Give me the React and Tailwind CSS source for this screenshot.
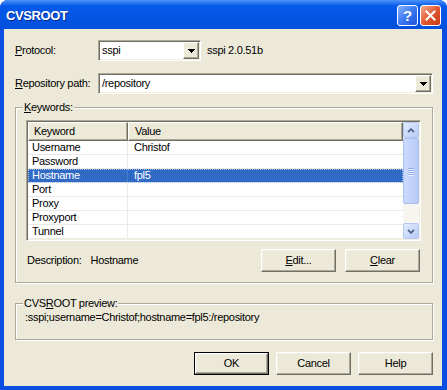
import React from "react";

const raised =
  "bg-[#ece9d8] border border-t-white border-l-white border-r-[#716f64] border-b-[#716f64] shadow-[inset_-1px_-1px_0_#aca899,inset_1px_1px_0_#f1efe2]";
const sunken =
  "border border-t-[#aca899] border-l-[#aca899] border-r-white border-b-white shadow-[inset_1px_1px_0_#716f64,inset_-1px_-1px_0_#f1efe2] p-[1px]";
const etched =
  "border border-[#aca899] shadow-[inset_1px_1px_0_#ffffff,1px_1px_0_#ffffff]";

function Combo({ value, className }) {
  return (
    <div className={`${sunken} h-[21px] bg-white flex ${className}`}>
      <div className="flex-1 pl-[2px] leading-[17px]">{value}</div>
      <div className={`${raised} w-[16px] h-[17px] flex items-center justify-center`}>
        <svg width="7" height="4" viewBox="0 0 7 4" className="mt-[1px]">
          <path d="M0 0h7v1h-1v1h-1v1h-1v1h-1v-1h-1v-1h-1v-1h-1z" fill="#000" />
        </svg>
      </div>
    </div>
  );
}

function Btn({ children, className = "" }) {
  return (
    <div className={`${raised} w-[75px] h-[23px] flex items-center justify-center ${className}`}>
      {children}
    </div>
  );
}

function ScrollBtn({ up }) {
  return (
    <div className="h-[16px] w-[16px] rounded-[2px] border border-[#b4c8f4] bg-linear-to-br from-[#e3ebfe] to-[#b7cbf7] flex items-center justify-center">
      <svg width="8" height="5" viewBox="0 0 8 5">
        <path
          d={up ? "M1 4.2L4 1.2L7 4.2" : "M1 0.8L4 3.8L7 0.8"}
          stroke="#4d6185"
          strokeWidth="1.8"
          fill="none"
        />
      </svg>
    </div>
  );
}

const rows = [
  ["Username", "Christof"],
  ["Password", ""],
  ["Hostname", "fpl5"],
  ["Port", ""],
  ["Proxy", ""],
  ["Proxyport", ""],
  ["Tunnel", ""],
];

export default function App() {
  return (
    <div className="w-[447px] h-[390px] flex flex-col bg-[#0a4fe2] rounded-t-[8px] overflow-hidden [font-family:'Liberation_Sans',Arial,sans-serif] text-[11px] leading-[13px] text-black tracking-[-0.3px]">
      {/* Title bar */}
      <div className="h-[29px] flex bg-linear-to-b from-[#4a94f8] from-0% via-[#0559ea] via-20% to-[#0150de] to-100%">
        <div className="flex-1 flex items-center pl-[6px] pt-[1px] text-white font-bold text-[13px] tracking-[-0.4px] [text-shadow:1px_1px_0_#0a2a8a]">
          CVSROOT
        </div>
        <div className="flex gap-[2px] pt-[5px] pr-[6px]">
          <div className="w-[21px] h-[21px] rounded-[3px] border border-white bg-linear-to-br from-[#8cb2fb] via-[#3a78f2] to-[#1d54d6] flex items-center justify-center text-white font-bold text-[15px] tracking-normal">
            ?
          </div>
          <div className="w-[21px] h-[21px] rounded-[3px] border border-white bg-linear-to-br from-[#f0ab92] via-[#e2582f] to-[#c23a12] flex items-center justify-center">
            <svg width="11" height="11" viewBox="0 0 11 11">
              <path d="M1.5 1.5L9.5 9.5M9.5 1.5L1.5 9.5" stroke="#fff" strokeWidth="2" strokeLinecap="square" />
            </svg>
          </div>
        </div>
      </div>

      {/* Client area */}
      <div className="flex-1 ml-[4px] mr-[5px] mb-[4px] bg-[#ece9d8] flex flex-col pl-[11px] pr-[9px]">
        {/* Protocol */}
        <div className="mt-[11px] h-[21px] flex items-center">
          <div className="w-[83px]">
            <u>P</u>rotocol:
          </div>
          <Combo value="sspi" className="w-[103px]" />
          <div className="ml-[6px]">sspi 2.0.51b</div>
        </div>

        {/* Repository path */}
        <div className="mt-[12px] h-[21px] flex items-center">
          <div className="w-[83px]">
            <u>R</u>epository path:
          </div>
          <Combo value="/repository" className="flex-1" />
        </div>

        {/* Keywords group */}
        <div className={`mt-[13px] ${etched} pl-[10px] pr-[11px] pb-[10px]`}>
          <div className="-mt-[7px] -ml-[3px] w-fit px-[1px] bg-[#ece9d8] leading-[13px]">
            <u>K</u>eywords:
          </div>
          <div className={`mt-[6px] h-[121px] ${sunken} bg-white flex`}>
            <div className="flex-1 flex flex-col">
              <div className="h-[19px] flex">
                <div className={`${raised} w-[100px] flex items-center pl-[5px]`}>Keyword</div>
                <div className={`${raised} flex-1 flex items-center pl-[6px]`}>Value</div>
              </div>
              {rows.map(([k, v], i) => {
                const sel = i === 2;
                return (
                  <div
                    key={k}
                    className={`h-[14px] flex border-b border-[#ebeae4] ${
                      sel ? "bg-[#316ac5] text-white outline-1 outline-dotted outline-[#a9c0ea] -outline-offset-1" : ""
                    }`}
                  >
                    <div className={`w-[100px] pl-[4px] border-r ${sel ? "border-[#4a7ccd]" : "border-[#ebeae4]"}`}>{k}</div>
                    <div className="flex-1 pl-[6px]">{v}</div>
                  </div>
                );
              })}
            </div>
            <div className="w-[16px] flex flex-col bg-[#f6f5f0]">
              <ScrollBtn up />
              <div className="h-[66px] rounded-[2px] border border-[#a9bff0] bg-linear-to-r from-[#cbdafd] to-[#b8cbf7] flex flex-col items-center justify-center gap-[1px]">
                <div className="w-[6px] h-[1px] bg-[#8ea8e6] shadow-[0_1px_0_#eef3ff]" />
                <div className="w-[6px] h-[1px] bg-[#8ea8e6] shadow-[0_1px_0_#eef3ff]" />
                <div className="w-[6px] h-[1px] bg-[#8ea8e6] shadow-[0_1px_0_#eef3ff]" />
                <div className="w-[6px] h-[1px] bg-[#8ea8e6] shadow-[0_1px_0_#eef3ff]" />
              </div>
              <div className="flex-1" />
              <ScrollBtn />
            </div>
          </div>
          <div className="mt-[8px] h-[23px] flex items-center mr-[1px]">
            <span className="ml-[1px]">Description:</span>
            <span className="ml-[9px]">Hostname</span>
            <div className="ml-auto flex gap-[9px]">
              <Btn>
                <span>
                  <u>E</u>dit...
                </span>
              </Btn>
              <Btn>
                <span>
                  <u>C</u>lear
                </span>
              </Btn>
            </div>
          </div>
        </div>

        {/* CVSROOT preview group */}
        <div className={`mt-[20px] ${etched} pl-[9px] pb-[15px]`}>
          <div className="-mt-[7px] -ml-[2px] w-fit px-[1px] bg-[#ece9d8] leading-[13px]">
            CVS<u>R</u>OOT preview:
          </div>
          <div className="mt-[1px] leading-[13px]">:sspi;username=Christof;hostname=fpl5:/repository</div>
        </div>

        {/* Bottom buttons */}
        <div className="mt-[12px] flex justify-end gap-[7px]">
          <div className="w-[75px] h-[23px] border border-black flex">
            <div className={`${raised} flex-1 flex items-center justify-center`}>OK</div>
          </div>
          <Btn>Cancel</Btn>
          <Btn>Help</Btn>
        </div>
      </div>
    </div>
  );
}
